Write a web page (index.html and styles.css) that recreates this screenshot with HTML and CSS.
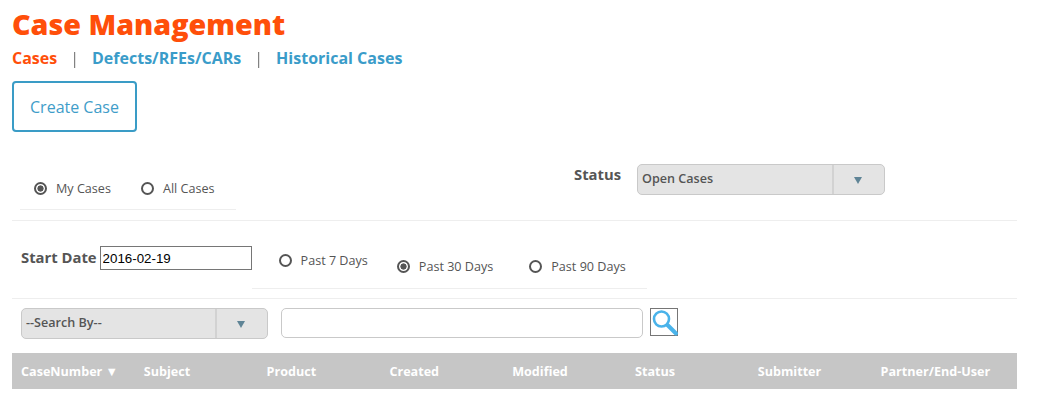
FILE: index.html
```html
<!DOCTYPE html>
<html>
<head>
    <title>Case Management</title>
    <link rel="stylesheet" href="styles.css">
</head>
<body>
    <h1 class="page-title">Case Management</h1>
    <div class="tabs">
        <a class="tab tab-active">Cases</a>
        <span class="tab-sep">|</span>
        <a class="tab">Defects/RFEs/CARs</a>
        <span class="tab-sep">|</span>
        <a class="tab">Historical Cases</a>
    </div>
    <button class="create-btn">Create Case</button>

    <!-- Owner and status -->
    <div class="filter-row row-owner">
        <div class="radio-group owner-group">
            <label class="radio radio-on">My Cases</label>
            <label class="radio">All Cases</label>
        </div>
        <div class="status-field">
            <span class="field-label">Status</span>
            <div class="dropdown status-dropdown">
                <span class="dropdown-value">Open Cases</span>
                <span class="dropdown-arrow"></span>
            </div>
        </div>
    </div>

    <!-- Date range -->
    <div class="filter-row row-date">
        <span class="field-label">Start Date</span>
        <input class="date-input" type="text" value="2016-02-19">
        <div class="radio-group date-group">
            <label class="radio radio-first">Past 7 Days</label>
            <label class="radio radio-on">Past 30 Days</label>
            <label class="radio">Past 90 Days</label>
        </div>
    </div>

    <!-- Search -->
    <div class="search-row">
        <div class="dropdown search-dropdown">
            <span class="dropdown-value">--Search By--</span>
            <span class="dropdown-arrow"></span>
        </div>
        <input class="search-input" type="text">
        <button class="search-btn">
            <svg width="28" height="28" viewBox="0 0 28 28">
                <circle cx="10.5" cy="10" r="7.5" fill="none" stroke="#4ab3ea" stroke-width="2.6"/>
                <path d="M16.5 16 L25 24.5" stroke="#4ab3ea" stroke-width="4" stroke-linecap="round"/>
            </svg>
        </button>
    </div>

    <div class="table-head">
        <div class="col">CaseNumber ▼</div>
        <div class="col">Subject</div>
        <div class="col">Product</div>
        <div class="col">Created</div>
        <div class="col">Modified</div>
        <div class="col">Status</div>
        <div class="col">Submitter</div>
        <div class="col">Partner/End-User</div>
    </div>
</body>
</html>
```

FILE: styles.css
```css
body {
    margin: 0;
    padding: 0 21px 0 12px;
    font-family: 'Open Sans', sans-serif;
    background: white;
    color: #555;
}
.page-title {
    margin: 0;
    height: 46px;
    padding-top: 5px;
    box-sizing: border-box;
    font-size: 28.7px;
    line-height: 38px;
    font-weight: 800;
    color: #ff4f0a;
}
.tabs {
    display: flex;
    height: 24px;
    line-height: 24px;
    font-size: 16px;
    font-weight: 700;
}
.tab {
    color: #3a9cc9;
}
.tab-active {
    color: #ff4f0a;
}
.tab-sep {
    margin: 0 13px;
    font-weight: 400;
    color: #777;
    will-change: opacity;
}
.create-btn {
    display: block;
    width: 125px;
    height: 51px;
    margin-top: 11px;
    padding: 0;
    background: white;
    border: 2px solid #3a9cc6;
    border-radius: 4px;
    font-family: inherit;
    font-size: 16px;
    color: #3f9dc9;
}

/* Filter rows */
.filter-row {
    display: flex;
    border-bottom: 1px solid #eee;
    box-sizing: border-box;
}
.row-owner {
    height: 89px;
    padding-top: 32px;
}
.row-date {
    height: 78px;
    padding-left: 9px;
    padding-top: 25px;
}
.radio-group {
    display: flex;
    border-bottom: 1px solid #eee;
    box-sizing: border-box;
    font-size: 12.6px;
}
.owner-group {
    width: 216px;
    height: 46px;
    margin-left: 8px;
    padding-left: 14px;
    padding-top: 16px;
}
.owner-group .radio {
    margin-right: 30px;
}
.date-group {
    width: 395px;
    height: 43px;
    padding-left: 27px;
    padding-top: 6px;
}
.date-group .radio {
    margin-right: 36px;
    padding-top: 6px;
}
.date-group .radio-first {
    padding-top: 0;
    margin-right: 29px;
}
.radio {
    display: flex;
    align-items: center;
    height: 18px;
    line-height: 18px;
    white-space: nowrap;
    color: #555;
}
.radio::before {
    content: '';
    width: 13px;
    height: 13px;
    box-sizing: border-box;
    margin-top: -2px;
    margin-right: 9px;
    border: 2px solid #555;
    border-radius: 50%;
    background: white;
}
.radio-on::before {
    background: radial-gradient(circle, #555 0, #555 2.8px, white 3.4px);
}
.field-label {
    font-size: 14.8px;
    font-weight: 700;
    color: #555;
    line-height: 24px;
}
.row-date .field-label {
    margin-top: -1px;
}
.status-field {
    display: flex;
    margin-left: 338px;
}
.status-field .field-label {
    margin-top: -2px;
    margin-right: 16px;
}
.dropdown {
    display: flex;
    justify-content: space-between;
    box-sizing: border-box;
    height: 31px;
    background: #e4e4e4;
    border: 1px solid #c9c9c9;
    border-radius: 5px;
    font-size: 12.6px;
    font-weight: 600;
    color: #555;
}
.status-dropdown {
    width: 248px;
}
.search-dropdown {
    width: 247px;
}
.dropdown-value {
    padding-left: 4px;
    line-height: 27px;
}
.dropdown-arrow {
    position: relative;
    width: 50px;
    border-left: 2px solid #d2d2d2;
}
.dropdown-arrow::after {
    content: '';
    position: absolute;
    left: 20px;
    top: 12px;
    border-left: 4px solid transparent;
    border-right: 4px solid transparent;
    border-top: 7px solid #5f8496;
}
.date-input {
    width: 152px;
    height: 24px;
    margin-left: 3px;
    padding: 0 2px;
    box-sizing: border-box;
    border: 1px solid #767676;
    font-family: 'Liberation Sans', sans-serif;
    font-size: 13.33px;
    color: black;
}

/* Search */
.search-row {
    display: flex;
    height: 54px;
    padding-top: 9px;
    padding-left: 9px;
    box-sizing: border-box;
}
.search-input {
    width: 362px;
    height: 30px;
    margin-left: 13px;
    box-sizing: border-box;
    border: 1px solid #c9c9c9;
    border-radius: 5px;
}
.search-btn {
    width: 28px;
    height: 28px;
    margin-left: 7px;
    padding: 0;
    background: white;
    border: 1px solid #767676;
    line-height: 0;
}

/* Table header */
.table-head {
    display: grid;
    grid-template-columns: repeat(8, 122.8px);
    height: 36px;
    padding-left: 9px;
    background: #c6c6c6;
    box-sizing: border-box;
    font-size: 12.6px;
    font-weight: 700;
    line-height: 37px;
    color: white;
}
.col {
    white-space: nowrap;
}
```
